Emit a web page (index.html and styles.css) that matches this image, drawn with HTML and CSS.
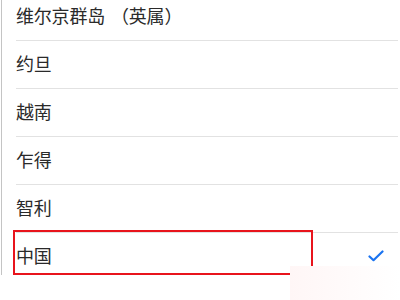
FILE: index.html
```html
<!DOCTYPE html>
<html lang="zh">
<head>
<meta charset="utf-8">
<link rel="stylesheet" href="styles.css">
</head>
<body>
<div class="page">
  <div class="frame">
    <ul class="list">
      <li class="row first"><span class="label">维尔京群岛<span class="paren">（英属）</span></span></li>
      <li class="row"><span class="label">约旦</span></li>
      <li class="row"><span class="label">越南</span></li>
      <li class="row"><span class="label">乍得</span></li>
      <li class="row"><span class="label">智利</span></li>
      <li class="row last"><span class="label">中国</span>
        <svg class="check" width="16" height="12" viewBox="0 0 16 12"><path d="M1.5 6.5 L5.5 10.2 L14.5 1.5" fill="none" stroke="#1a73f0" stroke-width="2.2" stroke-linecap="round" stroke-linejoin="round"/></svg>
      </li>
    </ul>
  </div>
  <div class="highlight"></div>
  <div class="mask"></div>
</div>
</body>
</html>
```
FILE: styles.css
```css
html, body {
  margin: 0;
  padding: 0;
  background: #fff;
}
.page {
  position: relative;
  width: 400px;
  height: 300px;
  overflow: hidden;
  font-family: "Noto Sans CJK SC", "Noto Sans", sans-serif;
}
.frame {
  margin-left: 1px;
  height: 275px;
  border-left: 1px solid #c4c4c4;
  overflow: hidden;
}
.list {
  list-style: none;
  margin: -7px 0 0 0;
  padding: 0 2px 0 14px;
}
.row {
  height: 47px;
  box-sizing: content-box;
  border-bottom: 1px solid #e2e2e2;
  display: flex;
  align-items: center;
  justify-content: space-between;
  padding-right: 14px;
}
.row.last {
  border-bottom: none;
}
.label {
  font-size: 18px;
  color: #2a2a2a;
  line-height: 1;
  margin-bottom: 4px;
  letter-spacing: -0.2px;
}
.paren {
  margin-left: 6px;
}
.check {
  display: block;
  margin-top: -2px;
}
.highlight {
  position: absolute;
  left: 13px;
  top: 230px;
  width: 296px;
  height: 41px;
  border: 2px solid #e8141c;
}
.mask {
  position: absolute;
  left: 290px;
  top: 266px;
  width: 110px;
  height: 34px;
  background: linear-gradient(90deg, #fff6f6, #ffffff);
}
```
